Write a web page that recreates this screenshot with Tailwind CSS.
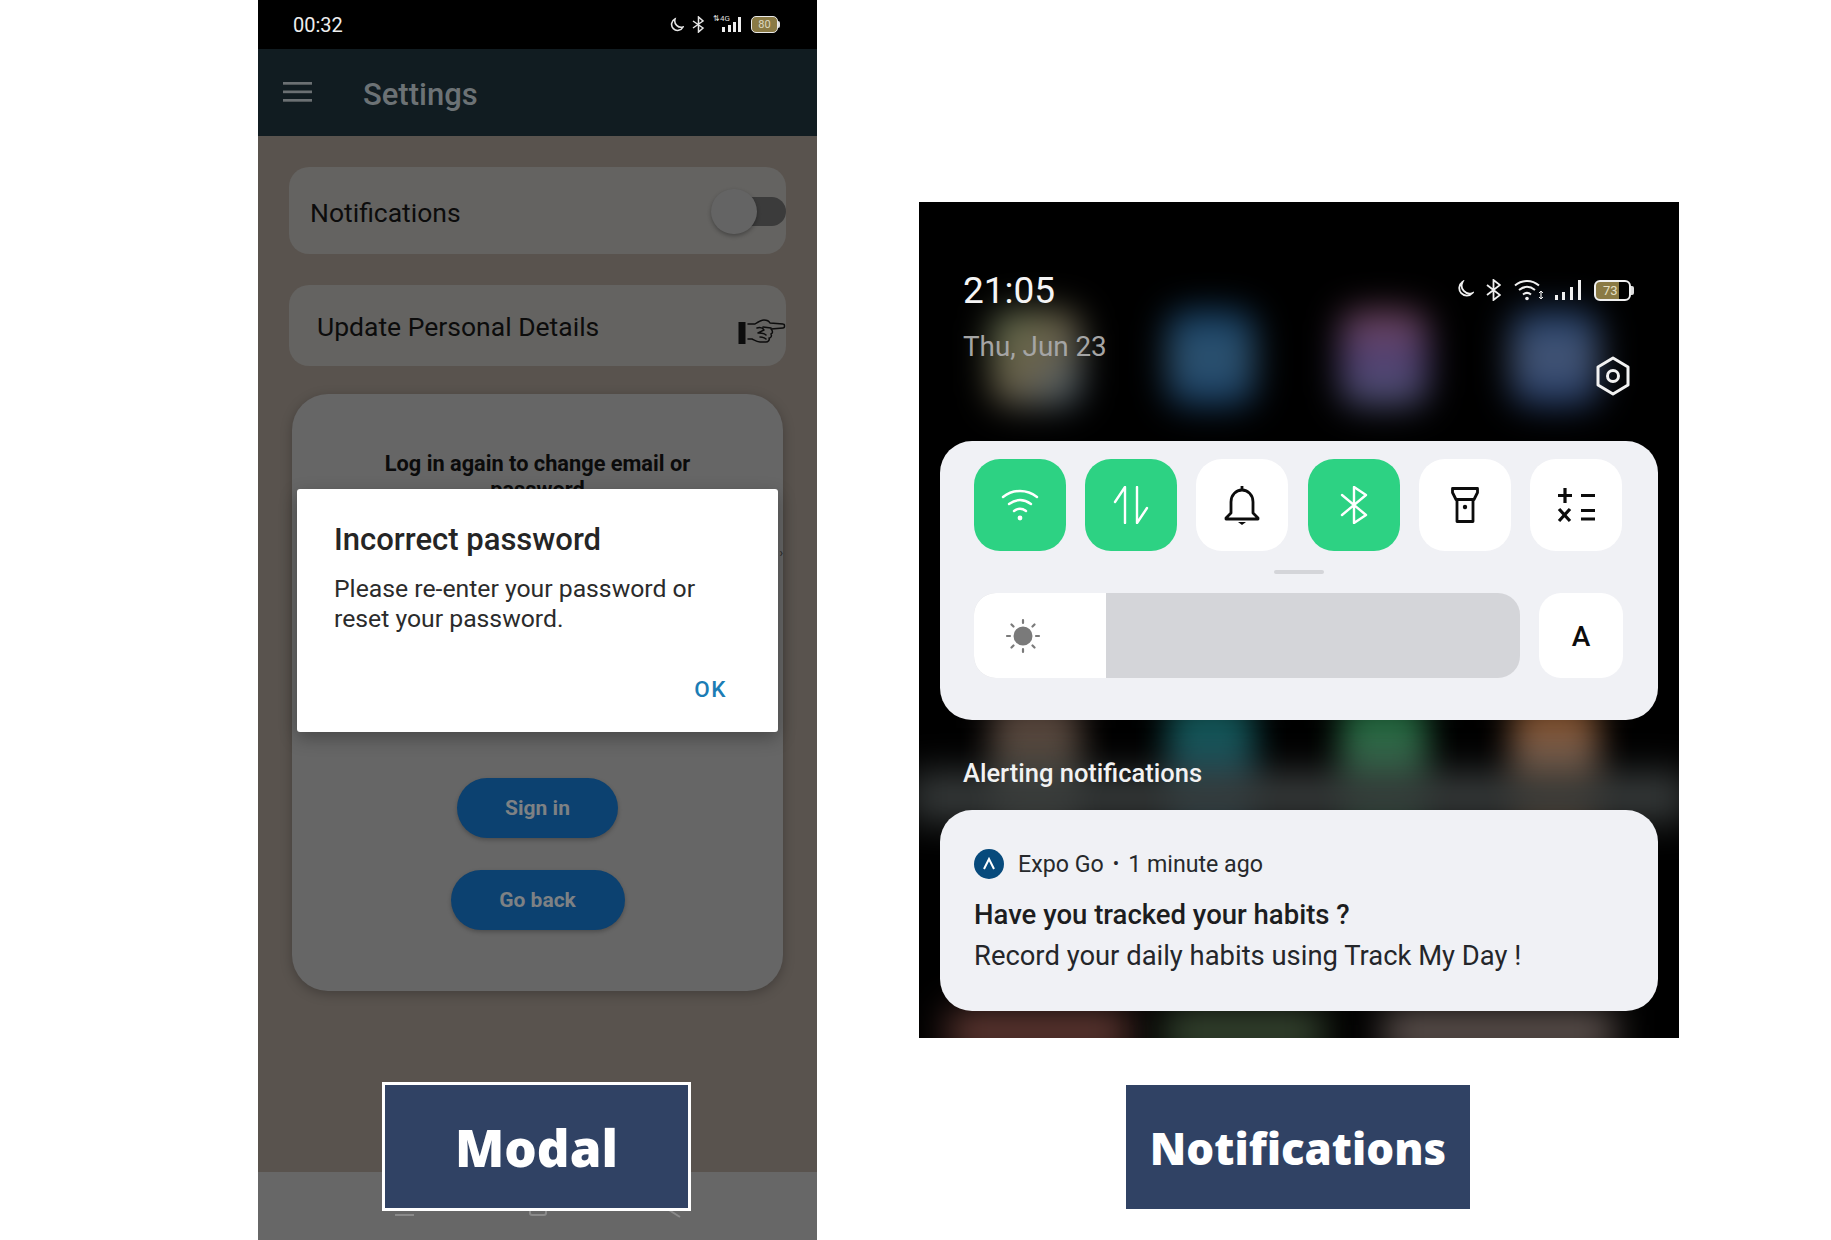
<!DOCTYPE html>
<html>
<head>
<meta charset="utf-8">
<script src="https://cdn.jsdelivr.net/npm/@tailwindcss/browser@4"></script>
</head>
<body class="bg-white">
<div class="flex w-[1831px] h-[1240px] bg-white overflow-hidden font-['Roboto',sans-serif]">

  <!-- LEFT PHONE -->
  <section class="relative ml-[258px] w-[559px] h-[1240px] shrink-0 bg-[#59534e] flex flex-col">
    <div class="h-[49px] bg-black flex items-center justify-between pl-[35px] pr-[37px] text-white">
      <span class="text-[20px] pt-[1px] text-[#eeeeee]">00:32</span>
      <div class="flex items-center gap-[8px]">
        <svg width="14" height="16" viewBox="0 0 14 16" fill="none" stroke="#e6e6e6" stroke-width="1.6"><path d="M5 2a6 6 0 1 0 8 8 6.5 6.5 0 0 1-8-8z"/></svg>
        <svg width="13" height="17" viewBox="0 0 13 17" fill="none" stroke="#e6e6e6" stroke-width="1.5"><path d="M1 5l10 7-4.500 4V1L11 5 1 12"/></svg>
        <div class="relative w-[29px] h-[17px]">
          <span class="absolute left-0 -top-[1px] text-[8px] leading-[8px] text-[#dddddd]">⇅4G</span>
          <svg class="absolute left-0 top-0" width="29" height="17" viewBox="0 0 29 17" fill="#eeeeee"><rect x="9" y="11" width="3" height="5"/><rect x="15" y="9" width="3" height="7"/><rect x="20" y="6" width="3" height="10"/><rect x="25" y="1" width="3" height="15"/></svg>
        </div>
        <div class="ml-[1px] flex items-center">
          <div class="w-[27px] h-[17px] rounded-[5px] border-[1.5px] border-[#e8e8e8] bg-[#8a7a45] flex items-center justify-center text-[11px] leading-none text-[#ddd8c0]">80</div>
          <div class="w-[2px] h-[7px] bg-[#dddddd] rounded-r-[2px]"></div>
        </div>
      </div>
    </div>
    <div class="h-[87px] bg-[#111c21] flex items-center pl-[25px]">
      <svg class="mt-[-1px]" width="29" height="20" viewBox="0 0 29 20" fill="#6b7073"><rect y="0" width="29" height="2.700"/><rect y="8.500" width="29" height="2.700"/><rect y="17" width="29" height="2.700"/></svg>
      <span class="ml-[51px] pt-[4px] text-[31px] font-medium text-[#6c7275] leading-none">Settings</span>
    </div>

    <div class="flex-1 pl-[31px] pr-[31px] flex flex-col">
      <div class="relative mt-[31px] h-[87px] rounded-[20px] bg-[#646361] flex items-center pl-[21px]">
        <span class="pt-[4px] text-[26.500px] text-[#0c0c0c]">Notifications</span>
        <div class="absolute right-0 top-[30px] w-[55px] h-[29px] rounded-full bg-[#3b3b3b]"></div>
        <div class="absolute right-[29px] top-[22px] w-[46px] h-[45px] rounded-full bg-[#646464] shadow-[0_2px_4px_rgba(0,0,0,0.3)]"></div>
      </div>
      <div class="relative mt-[31px] h-[81px] rounded-[20px] bg-[#646361] flex items-center pl-[28px]">
        <span class="pt-[3px] text-[26.500px] text-[#0c0c0c]">Update Personal Details</span>
        <svg class="absolute right-0 top-[34px]" width="48" height="27" viewBox="0 0 48 27" fill="none" stroke="#0c0c0c" stroke-width="1.500" stroke-linejoin="round" stroke-linecap="round">
          <rect x="0.500" y="3" width="7" height="22" fill="#0c0c0c" stroke="none"/>
          <path d="M10 5h7c3-2 6-4 9-4 3 0 5 1 6 3l13 1c2 0 2 4 0 4l-12 1c2 2 2 4 0 5 1 2 0 4-2 4 1 2-1 4-3 4h-6c-3 0-6-2-8-3h-4"/>
          <path d="M19 9c3-1 6 0 7 2l-6 3M21 14c3 0 6 1 7 2M22 18c2 0 5 1 6 2M33 9l-8-1"/>
        </svg>
      </div>
      <div class="relative mt-[28px] mx-[3px] h-[597px] rounded-[36px] bg-[#666666] shadow-[0_3px_12px_rgba(0,0,0,0.25)] flex flex-col items-center overflow-hidden">
        <p class="mt-[57px] w-[340px] text-center text-[21.750px] leading-[26px] font-bold text-[#0b0b0b]">Log in again to change email or password</p>
        <span class="absolute right-0 top-[150px] text-[12px] text-[#222222]">›</span>
        <div class="mt-[275px] w-[161px] h-[60px] rounded-full bg-[#0c4170] shadow-[0_2px_4px_rgba(0,0,0,0.25)] flex items-center justify-center pt-[2px] text-[21px] font-bold text-[#7e8184]">Sign in</div>
        <div class="mt-[32px] w-[174px] h-[60px] rounded-full bg-[#0c4170] shadow-[0_2px_4px_rgba(0,0,0,0.25)] flex items-center justify-center pt-[2px] text-[21px] font-bold text-[#7e8184]">Go back</div>
      </div>
    </div>

    <div class="relative h-[68px] bg-[#676767]">
      <div class="absolute left-[137px] top-[42px] w-[19px] h-[2px] bg-[#8a8a8a]"></div>
      <div class="absolute left-[271px] top-[30px] w-[18px] h-[14px] rounded-[3px] border-2 border-[#8a8a8a]"></div>
      <svg class="absolute left-[408px] top-[30px]" width="16" height="16" viewBox="0 0 16 16" fill="none" stroke="#8a8a8a" stroke-width="2"><path d="M14 1L3 8l11 7"/></svg>
    </div>

    <!-- dialog -->
    <div class="absolute left-[39px] top-[489px] w-[481px] h-[243px] bg-white rounded-[3px] shadow-[0_6px_18px_rgba(0,0,0,0.3)] pl-[37px] pr-[30px] pt-[32px]">
      <h2 class="text-[31px] leading-[38px] font-medium text-[#252525]">Incorrect password</h2>
      <p class="mt-[15px] text-[24.750px] leading-[29.500px] text-[#2b2b2b]">Please re-enter your password or<br>reset your password.</p>
      <div class="absolute right-[51px] bottom-[30px] text-[22.500px] leading-[26px] tracking-[1.500px] font-medium text-[#1b7db5]">OK</div>
    </div>

    <!-- caption -->
    <div class="absolute left-[124px] top-[1082px] w-[309px] h-[129px] bg-[#304264] border-[3px] border-white flex items-center justify-center pt-[2px] font-['Open_Sans',sans-serif] text-[51px] font-extrabold text-white">Modal</div>
  </section>

  <!-- RIGHT -->
  <div class="ml-[102px] w-[760px] shrink-0 flex flex-col">
    <section class="relative mt-[202px] h-[836px] bg-black overflow-hidden">
      <!-- blurred wallpaper -->
      <div class="absolute left-[72px] top-[108px] w-[90px] h-[96px] rounded-[20px] blur-[17px] bg-linear-to-br from-[#5f7050] via-[#6a6048] to-[#4a6076]"></div>
      <div class="absolute left-[248px] top-[108px] w-[88px] h-[96px] rounded-[20px] blur-[17px] bg-linear-to-b from-[#123f66] via-[#305470] to-[#163e66]"></div>
      <div class="absolute left-[421px] top-[108px] w-[88px] h-[96px] rounded-[20px] blur-[17px] bg-linear-to-b from-[#74445a] via-[#503f72] to-[#4c5272]"></div>
      <div class="absolute left-[592px] top-[108px] w-[88px] h-[96px] rounded-[20px] blur-[17px] bg-linear-to-b from-[#203e6a] via-[#485876] to-[#213a68]"></div>
      <div class="absolute left-[72px] top-[500px] w-[90px] h-[115px] rounded-[20px] blur-[16px] bg-linear-to-b from-[#5a443a] to-[#474a42]"></div>
      <div class="absolute left-[248px] top-[500px] w-[88px] h-[115px] rounded-[20px] blur-[16px] bg-linear-to-b from-[#0c5654] to-[#234c5e]"></div>
      <div class="absolute left-[421px] top-[500px] w-[88px] h-[115px] rounded-[20px] blur-[16px] bg-linear-to-b from-[#146636] via-[#36664c] to-[#185a32]"></div>
      <div class="absolute left-[592px] top-[500px] w-[88px] h-[115px] rounded-[20px] blur-[16px] bg-linear-to-b from-[#864a1a] via-[#745e50] to-[#744418]"></div>
      <div class="absolute -left-[10px] top-[570px] w-[780px] h-[50px] blur-[18px] bg-[#363a3a]"></div>
      <div class="absolute left-[30px] top-[808px] w-[180px] h-[44px] blur-[18px] bg-[#633a34]"></div>
      <div class="absolute left-[245px] top-[808px] w-[160px] h-[44px] blur-[18px] bg-[#384832]"></div>
      <div class="absolute left-[465px] top-[808px] w-[230px] h-[44px] blur-[18px] bg-[#625652]"></div>

      <!-- content -->
      <div class="relative flex flex-col h-full pl-[21px] pr-[21px]">
        <div class="h-[239px] pt-[66px] pl-[23px] relative">
          <div class="pt-[1px] text-[37px] leading-[44px] text-[#f5f5f5]">21:05</div>
          <div class="mt-[18px] text-[27.800px] leading-[32px] text-[#a5a5a5]">Thu, Jun 23</div>
          <div class="absolute right-[24px] top-[77px] flex items-center gap-[8px]">
            <svg width="18" height="20" viewBox="0 0 17 20" fill="none" stroke="#f0f0f0" stroke-width="1.800"><path d="M6 2a7.500 7.500 0 1 0 10 11 8 8 0 0 1-10-11z"/></svg>
            <svg class="ml-[4px]" width="15" height="22" viewBox="0 0 15 22" fill="none" stroke="#f0f0f0" stroke-width="1.800"><path d="M1 6l13 10-6.500 5V1L14 6 1 16"/></svg>
            <svg class="ml-[5px]" width="30" height="22" viewBox="0 0 30 22" fill="none" stroke="#f0f0f0" stroke-width="2"><path d="M1 6.500c7-6 17-6 24 0M5 11c5-4 11-4 16 0M9 15.500c3-2.400 5-2.400 8 0"/><circle cx="13" cy="19.500" r="1.800" fill="#f0f0f0" stroke="none"/><path d="M27 12v8" stroke-width="1.200"/><path d="M25 14l2-2 2 2M25 18l2 2 2-2" stroke-width="1"/></svg>
            <svg class="ml-[2px]" width="28" height="22" viewBox="0 0 28 22" fill="#f0f0f0"><rect x="1" y="16" width="3" height="5"/><rect x="8" y="13" width="3" height="8"/><rect x="16" y="8" width="3" height="13"/><rect x="24" y="1" width="3" height="20"/></svg>
            <div class="ml-[4px] flex items-center">
              <div class="w-[37px] h-[21px] rounded-[6px] border-2 border-[#f0f0f0] bg-linear-to-r from-[#8a7a45] from-70% to-black to-70% flex items-center pl-[7px] text-[13px] leading-none text-[#e6e0c5]">73</div>
              <div class="w-[3px] h-[9px] bg-[#dddddd] rounded-r-[2px]"></div>
            </div>
          </div>
          <svg class="absolute right-[27px] top-[154px]" width="36" height="40" viewBox="0 0 36 40" fill="none" stroke="#f2f2f2" stroke-width="3"><path d="M18 2l15 9v18l-15 9-15-9V11z" stroke-linejoin="round"/><circle cx="18" cy="20" r="5.500"/></svg>
        </div>

        <div class="h-[279px] rounded-[32px] bg-[#f0f1f5] pl-[34px] pr-[35px] pt-[18px] flex flex-col">
          <div class="flex justify-between mr-[1px]">
            <div class="w-[92px] h-[92px] rounded-[26px] bg-[#2dd283] flex items-center justify-center">
              <svg width="38" height="34" viewBox="0 0 38 34" fill="none" stroke="#ffffff" stroke-width="2.400" stroke-linecap="round"><path d="M2 9c10-8 24-8 34 0M8 16c7-5 15-5 22 0M13 23c4-3 8-3 12 0"/><circle cx="19" cy="30" r="2.400" fill="#ffffff" stroke="none"/></svg>
            </div>
            <div class="w-[92px] h-[92px] rounded-[26px] bg-[#2dd283] flex items-center justify-center">
              <svg width="36" height="38" viewBox="0 0 36 38" fill="none" stroke="#ffffff" stroke-width="2.400" stroke-linecap="round" stroke-linejoin="round"><path d="M12 37V1L2 16"/><path d="M24 1v36l10-15"/></svg>
            </div>
            <div class="w-[92px] h-[92px] rounded-[26px] bg-white flex items-center justify-center">
              <svg width="36" height="40" viewBox="0 0 36 40" fill="none" stroke="#0c0c0c" stroke-width="2.800" stroke-linejoin="round"><path d="M18 1v4"/><path d="M7 28V17c0-7 5-12 11-12s11 5 11 12v11l5 5v1H2v-1z"/><path d="M14 37h8l-4 3z" fill="#0c0c0c" stroke="none"/></svg>
            </div>
            <div class="w-[92px] h-[92px] rounded-[26px] bg-[#2dd283] flex items-center justify-center">
              <svg width="28" height="38" viewBox="0 0 28 38" fill="none" stroke="#ffffff" stroke-width="2.400" stroke-linecap="round" stroke-linejoin="round"><path d="M2 9l24 20-12 8V1l12 8L2 29"/></svg>
            </div>
            <div class="w-[92px] h-[92px] rounded-[26px] bg-white flex items-center justify-center">
              <svg width="28" height="36" viewBox="0 0 28 36" fill="none" stroke="#0c0c0c" stroke-width="2.800" stroke-linejoin="round"><path d="M1.500 1.500h25v4l-3.500 7h-18l-3.500-7z"/><path d="M6 12.500V34.500h16V12.500"/><circle cx="14" cy="20" r="2.200" fill="#0c0c0c" stroke="none"/></svg>
            </div>
            <div class="w-[92px] h-[92px] rounded-[26px] bg-white flex items-center justify-center">
              <svg width="38" height="36" viewBox="0 0 38 36" fill="none" stroke="#0c0c0c" stroke-width="3.200"><path d="M8 1v15M1 8.500h14M24 8.500h14M2 22l11 12M13 22L2 34M24 23.500h14M24 32h14"/></svg>
            </div>
          </div>
          <div class="mt-[19px] mx-auto w-[50px] h-[4px] rounded-[2px] bg-[#d4d5d9]"></div>
          <div class="mt-[19px] flex justify-between">
            <div class="w-[546px] h-[85px] rounded-[22px] overflow-hidden bg-[#d4d5d9] flex">
              <div class="w-[132px] h-full bg-white flex items-center pl-[31px]">
                <svg width="36" height="36" viewBox="0 0 36 36" fill="#7a7a7a" stroke="#7a7a7a" stroke-width="2.200" stroke-linecap="round"><circle cx="18" cy="18" r="9.500" stroke="none"/><path d="M18 2v3M18 31v3M2 18h3M31 18h3M6.500 6.500l2 2M27.500 27.500l2 2M29.500 6.500l-2 2M8.500 27.500l-2 2"/></svg>
              </div>
            </div>
            <div class="w-[84px] h-[85px] rounded-[22px] bg-white flex items-center justify-center pt-[3px] text-[28px] font-medium text-[#0c0c0c]">A</div>
          </div>
        </div>

        <div class="h-[90px] pl-[23px] pt-[38px] text-[25.500px] leading-[30px] font-medium text-[#f2f2f2]">Alerting notifications</div>

        <div class="h-[201px] rounded-[32px] bg-[#f0f1f5] pl-[34px] pt-[39px]">
          <div class="flex items-center h-[30px]">
            <div class="w-[30px] h-[30px] rounded-full bg-[#074a7c] flex items-center justify-center">
              <svg width="14" height="14" viewBox="0 0 14 14" fill="none" stroke="#ffffff" stroke-width="2"><path d="M2 12L7 2l5 10"/></svg>
            </div>
            <span class="ml-[14px] text-[23.200px] text-[#27292c]">Expo Go</span>
            <span class="mx-[9px] text-[19px] text-[#27292c]">•</span>
            <span class="text-[23.200px] text-[#27292c]">1 minute ago</span>
          </div>
          <div class="mt-[20px] text-[27.500px] leading-[32px] font-medium text-[#1c1d20]">Have you tracked your habits ?</div>
          <div class="mt-[9px] text-[27.400px] leading-[32px] text-[#24262a]">Record your daily habits using Track My Day !</div>
        </div>
      </div>
    </section>

    <div class="mt-[47px] ml-[207px] w-[344px] h-[124px] bg-[#304264] flex items-center justify-center pt-[3px] font-['Open_Sans',sans-serif] text-[43.800px] font-extrabold text-white">Notifications</div>
  </div>
</div>
</body>
</html>
